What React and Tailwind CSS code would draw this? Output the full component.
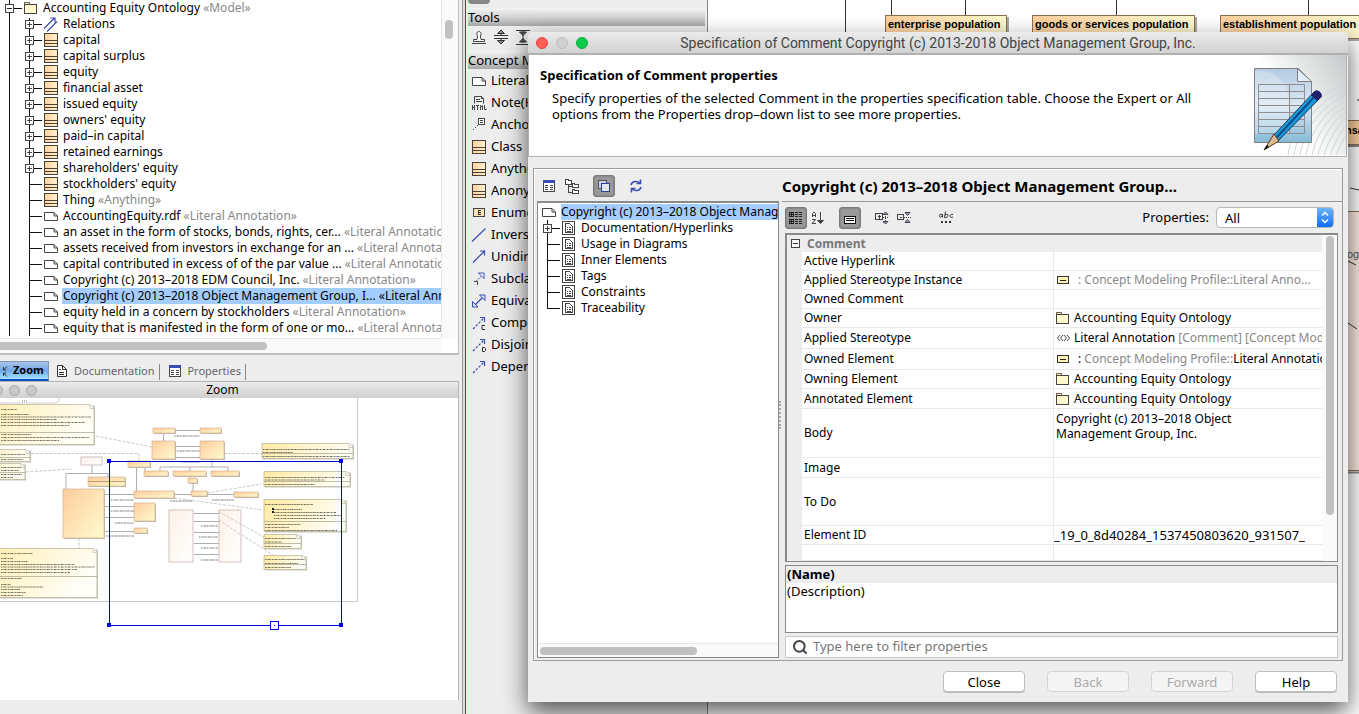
import React, { useState } from 'react';
import { Search } from 'lucide-react';

const treeItems = [
  { label: 'Relations', icon: 'relations', expand: true },
  { label: 'capital', icon: 'class', expand: true },
  { label: 'capital surplus', icon: 'class', expand: true },
  { label: 'equity', icon: 'class', expand: true },
  { label: 'financial asset', icon: 'class', expand: true },
  { label: 'issued equity', icon: 'class', expand: true },
  { label: "owners' equity", icon: 'class', expand: true },
  { label: 'paid–in capital', icon: 'class', expand: true },
  { label: 'retained earnings', icon: 'class', expand: true },
  { label: "shareholders' equity", icon: 'class', expand: true },
  { label: "stockholders' equity", icon: 'class' },
  { label: 'Thing', icon: 'class', note: '«Anything»' },
  { label: 'AccountingEquity.rdf', icon: 'note', note: '«Literal Annotation»' },
  { label: 'an asset in the form of stocks, bonds, rights, cer...', icon: 'note', note: '«Literal Annotation»' },
  { label: 'assets received from investors in exchange for an ...', icon: 'note', note: '«Literal Annotation»' },
  { label: 'capital contributed in excess of of the par value ...', icon: 'note', note: '«Literal Annotation»' },
  { label: 'Copyright (c) 2013–2018 EDM Council, Inc.', icon: 'note', note: '«Literal Annotation»' },
  { label: 'Copyright (c) 2013–2018 Object Management Group, I...', icon: 'note', note: '«Literal Annotation»', selected: true },
  { label: 'equity held in a concern by stockholders', icon: 'note', note: '«Literal Annotation»' },
  { label: 'equity that is manifested in the form of one or mo...', icon: 'note', note: '«Literal Annotation»' },
];

const paletteItems = [
  { label: 'Literal', icon: 'note' },
  { label: 'Note(HTML)', icon: 'html' },
  { label: 'Anchor', icon: 'anchor' },
  { label: 'Class', icon: 'class' },
  { label: 'Anything', icon: 'class' },
  { label: 'Anonymous', icon: 'class' },
  { label: 'Enumeration', icon: 'enum' },
  { label: 'Inverse', icon: 'line' },
  { label: 'Unidirectional', icon: 'arrow' },
  { label: 'Subclass', icon: 'subclass' },
  { label: 'Equivalent', icon: 'double' },
  { label: 'Complement', icon: 'dashC' },
  { label: 'Disjoint', icon: 'dashD' },
  { label: 'Dependency', icon: 'dash' },
];

const specItems = [
  'Documentation/Hyperlinks',
  'Usage in Diagrams',
  'Inner Elements',
  'Tags',
  'Constraints',
  'Traceability',
];

const owner = (
  <>
    <Icon name="folder" />
    <span className="ml-1">Accounting Equity Ontology</span>
  </>
);

const properties = [
  { name: 'Active Hyperlink', height: 'h-[19px]' },
  {
    name: 'Applied Stereotype Instance',
    height: 'h-[19px]',
    value: (
      <>
        <Icon name="instance" />
        <span className="ml-2 text-[#888]">: Concept Modeling Profile::Literal Anno...</span>
      </>
    ),
  },
  { name: 'Owned Comment', height: 'h-[19px]' },
  { name: 'Owner', height: 'h-[19px]', value: owner },
  {
    name: 'Applied Stereotype',
    height: 'h-[21px]',
    value: (
      <>
        <Icon name="stereotype" />
        <span className="ml-1">
          Literal Annotation <span className="text-[#888]">[Comment] [Concept Modeling]</span>
        </span>
      </>
    ),
  },
  {
    name: 'Owned Element',
    height: 'h-[21px]',
    value: (
      <>
        <Icon name="instance" />
        <span className="ml-2">
          : <span className="text-[#888]">Concept Modeling Profile::</span>Literal Annotation
        </span>
      </>
    ),
  },
  { name: 'Owning Element', height: 'h-[19px]', value: owner },
  { name: 'Annotated Element', height: 'h-5', value: owner },
  { name: 'Body', height: 'h-[49px]', body: 'Copyright (c) 2013–2018 Object Management Group, Inc.' },
  { name: 'Image', height: 'h-5' },
  { name: 'To Do', height: 'h-12' },
  { name: 'Element ID', height: 'h-[19px]', value: <span className="text-[13px]">_19_0_8d40284_1537450803620_931507_</span> },
  { name: '', height: 'h-4' },
];

function Icon({ name }) {
  const blue = '#3a4eb0';
  const shapes = {
    relations: (
      <g stroke={blue} fill="none" strokeWidth="1.200">
        <path d="M1 12.5 11.5 2M4 15.5 14 5.500M7.500 2H12V6.500" />
      </g>
    ),
    class: (
      <g shapeRendering="crispEdges">
        <rect x="1.500" y="1.500" width="13" height="13" fill="url(#classFill)" stroke="#4a4036" />
        <path d="M2 8.500h12M2 11.500h12" stroke="#4a4036" />
      </g>
    ),
    note: <path d="M1.500 4.500h9.500l3.500 3.500v4.500h-13zM11 4.500V8h3.500" fill="#fff" stroke="#444" />,
    folder: (
      <g shapeRendering="crispEdges">
        <path d="M2.500 2.500h5v2h-5z" fill="#ffe9c0" stroke="#7a6a50" />
        <rect x="2.500" y="4.500" width="12" height="9" fill="#fff8cf" stroke="#444" />
      </g>
    ),
    instance: (
      <g shapeRendering="crispEdges">
        <rect x="3.500" y="4.500" width="11" height="7" fill="#fff4b8" stroke="#333" />
        <path d="M6 8.500h6" stroke="#222" />
      </g>
    ),
    stereotype: <path d="M6 5 3.500 8 6 11M9 5 6.500 8 9 11M10 5l2.500 3L10 11M13 5l2.500 3L13 11" fill="none" stroke="#444" />,
    html: (
      <g stroke="#444" fill="none">
        <path d="M3.500 8.500v-7h7l2 2v5M10.500 1.500v2h2M5 4.500h4M5 6.500h6" />
        <path d="M1.500 10v5M3.500 10v5M1.500 12.500h2M5 10.500h3M6.500 10v5M9.500 15v-4.500l1 1.500 1-1.500V15M13.500 10v4.500H15.500" />
      </g>
    ),
    anchor: (
      <g stroke="#444" fill="none" shapeRendering="crispEdges">
        <rect x="7.500" y="1.500" width="6" height="6" fill="#fff" />
        <path d="M9 3.500h3M9 5.500h3" />
        <path d="m2 13 5-5" strokeDasharray="1.500 1" />
      </g>
    ),
    enum: (
      <g shapeRendering="crispEdges">
        <rect x="2.500" y="3.500" width="11" height="8" fill="#ffe4ba" stroke="#444" />
        <path d="M10 5.500H7.500v4H10M7.500 7.500H10" fill="none" stroke="#333" />
      </g>
    ),
    line: <path d="M1 14.500 14.500 1.500" stroke={blue} fill="none" strokeWidth="1.200" />,
    arrow: <path d="M2 13.500 14 1.500M9 2h4.500v4.500" stroke={blue} fill="none" strokeWidth="1.200" />,
    subclass: (
      <g fill="none">
        <path d="M5 10.500 10 5.500" stroke={blue} strokeDasharray="2 1" />
        <path d="M7.500 2H13v5.500z" fill="#fff" stroke={blue} />
        <path d="M3 10.500h3.500V14" stroke="#444" />
      </g>
    ),
    double: (
      <g fill="none" stroke={blue}>
        <path d="m4 12 8-8" strokeWidth="1.200" />
        <path d="M8.500 2H14v5.500zM1.500 8.500V14H7z" fill="#dfe3ff" />
      </g>
    ),
    dash: (
      <g fill="none" stroke={blue} strokeWidth="1.200">
        <path d="M2 14 13 3" strokeDasharray="2.500 1.500" />
        <path d="M9 2.500h4.500V7" />
      </g>
    ),
    page: (
      <g fill="none" stroke="#444" shapeRendering="crispEdges">
        <rect x="1.500" y="1.500" width="12" height="13" fill="#fff" />
        <path d="M4.500 3.500h4l3 3v6h-7zM6 7.500h1M8 7.500h2M6 9.500h1M8 9.500h2M6 11h4" />
      </g>
    ),
    doc: (
      <g fill="none" stroke="#333">
        <path d="M3.500 2.500h5l4 4v7h-9zM8.500 2.500v4h4" fill="#fff" />
        <path d="M5 6.500h2M5 9.500h5M5 11.500h5" />
      </g>
    ),
    sheet: (
      <g fill="none" stroke="#444" shapeRendering="crispEdges">
        <rect x="2.500" y="2.500" width="11" height="11" fill="#fff" />
        <path d="M2 3.500h12" stroke={blue} strokeWidth="3" />
        <path d="M4 7.500h3M9 7.500h3M4 9.500h3M9 9.500h3M4 11.500h3M9 11.500h3" />
      </g>
    ),
    zoom: (
      <g fill="none" stroke="#333">
        <path d="M2 3.500 5.500 7M5.500 4v3H3M14 3.500 10.500 7M10.500 4v3H13M2 13.500 5.500 10M5.500 13v-3H3M14 13.500 10.500 10M10.500 13v-3H13" />
      </g>
    ),
    branches: (
      <g fill="#fff" stroke="#444" shapeRendering="crispEdges">
        <path d="M4.500 6v8.500h4M4.500 8.500h4" fill="none" />
        <path d="M1.500 1.500h3v1h3v4h-6zM8.500 5.500h2v1h4v3h-6zM8.500 11.500h2v1h4v3h-6z" />
      </g>
    ),
    windows: (
      <g shapeRendering="crispEdges">
        <rect x="2.500" y="2.500" width="8" height="8" fill="#c9cef2" stroke="#555" />
        <rect x="5.500" y="5.500" width="8" height="8" fill="#e3e6fb" stroke="#2f3d9b" />
      </g>
    ),
    refresh: (
      <g fill="none" stroke={blue} strokeWidth="1.600">
        <path d="M3 7C4 3 9 2.500 12 5M13 9c-1 4-6 4.500-9 2" />
        <path d="M12.500 1.500V5.500H8.500M3.500 14.500V10.500H7.500" />
      </g>
    ),
    category: (
      <g fill="none" stroke="#222" shapeRendering="crispEdges">
        <path d="M1.500 2.500h4v4h-4zM1.500 9.500h4v4h-4zM3.500 3v3M2 4.500h3M3.500 10v3M2 11.500h3" />
        <path d="M7 2.500h3M11 2.500h3M7 4.500h3M11 4.500h3M7 6.500h3M11 6.500h3M7 9.500h3M11 9.500h3M7 11.500h3M11 11.500h3M7 13.500h3M11 13.500h3" />
      </g>
    ),
    sort: (
      <g fill="none" stroke="#444">
        <path d="M2.500 7V3.500L4 2l1.500 1.500V7M2.500 5.500h3M2 9.500h3.500L2 13.500h4M10.500 2v11" />
        <path d="M7.500 10.500h6l-3 3z" fill="#444" />
      </g>
    ),
    list: (
      <g shapeRendering="crispEdges">
        <rect x="2.500" y="6.500" width="11" height="7" fill="#fff" stroke="#111" />
        <path d="M4 8.500h8M4 10.500h8" stroke="#111" />
      </g>
    ),
    expand: (
      <g fill="none" stroke="#444">
        <path d="M1.500 3.500h7v6h-7zM5 5v3.500M3.500 6.500h3" shapeRendering="crispEdges" />
        <path d="M11.500 4v8M9 7.500h5" strokeDasharray="1 1" />
        <path d="M9 4.500 11.500 2 14 4.500zM9 11.500l2.500 2.500 2.500-2.500z" fill="#9aa2e0" />
      </g>
    ),
    collapse: (
      <g fill="none" stroke="#444">
        <path d="M1.500 4.500h6v5h-6zM3.500 7h2" shapeRendering="crispEdges" />
        <path d="M8 7.500h7" strokeDasharray="1 1" />
        <path d="m9 2.500 2.500 3 2.500-3zM9 12.500l2.500-3 2.500 3z" fill="#9aa2e0" />
      </g>
    ),
    abc: (
      <g fill="none" stroke="#333">
        <path d="M4.500 4.500C2 3.500 1 5 1.500 6.500s2.500.5 3-2v3M7.500 1.500 6.500 7.500c2 .5 3.500-.5 3.500-2s-1.500-1.500-3-.5M15 4.500c-2-.5-3 .5-3 1.500s1 2 3 1" />
        <path d="M3 12h2M7 12h2M11 12h2" strokeWidth="2" shapeRendering="crispEdges" />
      </g>
    ),
    stamp: <path d="M6 10.500 6.500 7C3.500 1 12 1 9.500 7l.5 3.500h3.500v2h-11v-2zM1 14.500h14" fill="#fff" stroke="#444" />,
    spread: (
      <g stroke="#333" fill="#888">
        <path d="M1 6.500h14M1 9.500h14M8 1v5M8 10v5" />
        <path d="M4.500 4.500 8 1l3.500 3.500zM4.500 11.500 8 15l3.500-3.500z" />
      </g>
    ),
    squeeze: (
      <g stroke="#333" fill="#555">
        <path d="M1 1.500h14M1 15.500h14M8 2v12" />
        <path d="M4.500 3 8 6.500 11.500 3zM4.500 13 8 9.500l3.500 3.500z" />
      </g>
    ),
  };
  if (name === 'dashC' || name === 'dashD') {
    return (
      <svg width="16" height="16" viewBox="0 0 16 16" className="shrink-0" aria-hidden="true">
        {shapes.dash}
        {name === 'dashC' ? (
          <path d="M14 10.500h-3v4h3" fill="none" stroke="#333" />
        ) : (
          <path d="M11.500 10.500h2l1 1v2l-1 1h-2z" fill="none" stroke="#333" />
        )}
      </svg>
    );
  }
  return (
    <svg width="16" height="16" viewBox="0 0 16 16" className="shrink-0" aria-hidden="true">
      {shapes[name]}
    </svg>
  );
}

// Branch lines in front of an item of the containment tree
function Branch({ expand, first }) {
  return (
    <svg width="43" height="16" className="shrink-0" shapeRendering="crispEdges" aria-hidden="true">
      <path d="M9.500 0v16M29.500 0v16M30 8.500h12" stroke="#111" fill="none" />
      {first && <path d="M29.500 0v2" stroke="#fff" />}
      {expand && (
        <g stroke="#444">
          <rect x="25.500" y="4.500" width="8" height="8" fill="#fff" />
          <path d="M27 8.500h5M29.500 6v5" />
        </g>
      )}
    </svg>
  );
}

function ContainmentTree() {
  return (
    <div className="border-r border-b-2 border-[#bdbdbd] bg-white">
      <div className="flex h-[338px]">
        <div className="min-w-0 flex-1 overflow-hidden whitespace-nowrap">
          <div className="flex h-4 items-center">
            <svg width="22" height="16" shapeRendering="crispEdges" className="shrink-0" aria-hidden="true">
              <path d="M9.500 0v16M10 8.500h12" stroke="#111" />
              <rect x="5.500" y="4.500" width="8" height="8" fill="#fff" stroke="#444" />
              <path d="M7 8.500h5" stroke="#222" />
            </svg>
            <Icon name="folder" />
            <span className="ml-[5px]">
              Accounting Equity Ontology <span className="text-[#888]">«Model»</span>
            </span>
          </div>
          {treeItems.map((item, index) => (
            <div key={item.label} className="flex h-4 items-center">
              <Branch expand={item.expand} first={index === 0} />
              <Icon name={item.icon} />
              <span className={item.selected ? 'ml-[3px] flex-1 bg-[#a4cdff] pl-px leading-4' : 'ml-1 leading-4'}>
                {item.label}{' '}
                {item.note && <span className={item.selected ? 'text-black' : 'text-[#888]'}>{item.note}</span>}
              </span>
            </div>
          ))}
        </div>
        <div className="w-[17px] border-l border-[#e6e6e6] bg-[#fafafa] pr-[5px] pl-[3px] pt-5">
          <div className="h-[19px] rounded-full bg-[#c1c1c1]" />
        </div>
      </div>
      <div className="mr-[17px] h-[15px] border-t border-[#e6e6e6] bg-[#fafafa] pt-[3px]">
        <div className="h-2 w-[267px] rounded-r-full bg-[#c1c1c1]" />
      </div>
    </div>
  );
}

function MapNote({ x, y, w, h, split, rows = [] }) {
  return (
    <g>
      <path d={`M${x + 1} ${y + 1}h${w}v${h}h${-w}z`} fill="#c9c9c0" />
      <path
        d={`M${x} ${y}h${w - 4}l4 4v${h - 4}h${-w}z`}
        fill="url(#noteFill)"
        stroke="#b5ad90"
        strokeWidth=".7"
      />
      <path d={`M${x + w - 4} ${y}v4h4`} fill="#fff" stroke="#b5ad90" strokeWidth=".6" />
      <path d={`M${x} ${y + split}h${w}`} stroke="#a8a088" strokeWidth=".7" />
      {rows.map(([dy, len, dx = 1]) => (
        <path
          key={dy}
          d={`M${x + dx} ${y + dy}h${len}`}
          stroke="#6e6a58"
          strokeWidth="1"
          strokeDasharray="1.300 .5 .8 .6 2 .5 .7 .7"
        />
      ))}
    </g>
  );
}

const mapBoxes = [
  [88, 477, 37, 9],
  [63, 489, 41, 49],
  [153, 428, 22, 5],
  [200, 428, 21, 5],
  [152, 441, 23, 18],
  [200, 441, 24, 18],
  [128, 461, 22, 6],
  [144, 471, 24, 5],
  [173, 471, 33, 5],
  [211, 471, 28, 5],
  [188, 478, 9, 5],
  [134, 491, 40, 7],
  [191, 491, 16, 5],
  [234, 492, 24, 5],
  [134, 503, 21, 18],
  [134, 528, 13, 5],
];

const mapLabels = [
  [174, 436, 26],
  [177, 451, 23],
  [181, 462, 19],
  [111, 500, 23],
  [111, 511, 23],
  [115, 523, 19],
  [106, 536, 28],
  [170, 501, 22],
  [212, 500, 22],
  [201, 526, 17],
  [199, 537, 19],
  [201, 548, 17],
  [201, 560, 17],
];

function DiagramMap() {
  return (
    <svg viewBox="0 398 459 302" width="459" height="302" role="img" aria-label="Diagram overview">
      <path d="M0 601.500H357.500V398" fill="none" stroke="#c8c8c8" />
      <path d="M0 403h56l3-2v-3" fill="none" stroke="#bbb" strokeWidth=".7" />
      <path d="M22 401h5" stroke="#666" strokeDasharray="1 1" />
      <g fill="none" stroke="#bbb" strokeWidth=".8" strokeDasharray="3 1.500">
        <path d="M96 436 152 447M31 453.500H139V461M26 472 72 469M79 538v10M224 453.500h38M207 493l55-9M174 498l89 12M219 512l54 30M219 520l54 35" />
      </g>
      <g fill="none" stroke="#8c8c8c" strokeWidth=".7">
        <path d="M92 465v8M66 489V473.500h42V477M175 430.500h25M163.500 433v8M175 446.500h25M175 457.500h25M212 459v8M160 471v-4h68v4M190 467v4M136.500 467v24M145 467v4M193 484v7M104 494.500h30M174 494.500h17M207 494.500h27M104 506.500h30M104 517.500h30M104 531.500h30M194 513.500h25M194 521.500h25M194 532.500h25M194 543.500h25M194 554.500h25" />
      </g>
      {mapBoxes.map(([x, y, w, h]) => (
        <g key={`${x}-${y}`}>
          <rect x={x + 1} y={y + 1} width={w} height={h} fill="#c4bfb8" />
          <rect x={x} y={y} width={w} height={h} fill="url(#boxFill)" stroke="#c59d78" strokeWidth=".5" />
        </g>
      ))}
      <path d="M88 481.500h37" stroke="#a08058" strokeWidth=".7" />
      {[[81, 457, 21, 8], [169, 510, 24, 52], [219, 510, 22, 52]].map(([x, y, w, h]) => (
        <rect key={x} x={x} y={y} width={w} height={h} fill="url(#paleFill)" stroke="#c4b5ae" strokeWidth=".8" />
      ))}
      <path d="m219 512 22 12M219 520l22 15" stroke="#bbb" strokeWidth=".8" strokeDasharray="3 1.500" />
      {mapLabels.map(([x, y, len]) => (
        <path key={`${x}-${y}`} d={`M${x} ${y}h${len}`} stroke="#777" strokeDasharray="1.300 .5 .8 .6 2 .5" />
      ))}
      <MapNote x={-40} y={404.500} w={134} h={40} split={28} rows={[[5, 16, 41], [10, 28, 41], [12.500, 90, 41], [15, 56, 41], [18, 84, 41], [21, 68, 41], [30, 30, 41], [33, 88, 41], [36, 58, 41]]} />
      <MapNote x={-40} y={449.500} w={70} h={12} split={8} rows={[[5, 24, 41], [10, 22, 41]]} />
      <MapNote x={-40} y={463.500} w={65} h={16} split={9} rows={[[4, 20, 41], [7, 18, 41], [11, 21, 41], [14, 12, 41]]} />
      <MapNote x={-40} y={548.500} w={137} h={49} split={28} rows={[[5, 32, 41], [10, 12, 41], [13, 27, 41], [16, 74, 41], [18.500, 94, 41], [21, 76, 41], [24, 69, 41], [30, 21, 41], [36, 10, 41], [38.500, 42, 41], [41, 19, 41], [44, 25, 41], [47, 22, 41]]} />
      <MapNote x={262} y={443.500} w={91} h={15} split={10} rows={[[6, 87], [9, 30], [13, 87]]} />
      <MapNote x={264} y={471.500} w={86} h={15} split={10} rows={[[6, 80], [8.500, 60], [13, 50]]} />
      <MapNote x={264} y={499.500} w={82} h={32} split={22} rows={[[5, 48], [10, 28, 10], [13, 62, 10], [16, 68, 10], [19, 52, 10], [25, 36], [28, 24], [31, 72]]} />
      <path d="M272 508h2v2h-2zM272 511h2v2h-2z" fill="#222" />
      <MapNote x={264} y={534.500} w={37} h={14} split={9} rows={[[4, 31], [7.500, 17], [12, 26]]} />
      <MapNote x={264} y={555.500} w={42} h={14} split={9} rows={[[4, 39], [8, 33], [12, 26]]} />
      <g shapeRendering="crispEdges">
        <rect x="109.500" y="461.500" width="232" height="164" fill="none" stroke="#0000d8" />
        <path d="M107 459h4v4h-4zM339 459h4v4h-4zM107 623h4v4h-4zM339 623h4v4h-4z" fill="#0000f0" />
        <rect x="270.500" y="621.500" width="8" height="8" fill="#fff" stroke="#0000f0" />
        <path d="M274 625h1v1h-1z" fill="#0000f0" />
      </g>
    </svg>
  );
}

function ZoomPanel() {
  return (
    <div>
      <div className="flex h-[26px] items-end text-[11px] text-[#666]" role="tablist">
        <button role="tab" className="flex h-5 w-[49px] items-center gap-1 overflow-hidden border border-l-0 border-b-2 border-[#8298b4] border-b-[#0a4fc4] bg-gradient-to-b from-[#a9c4e6] via-[#6fa8ea] to-[#9fe6ff] font-bold text-black">
          <span className="-ml-[7px] flex"><Icon name="zoom" /></span>
          Zoom
        </button>
        <button role="tab" className="ml-[5px] flex h-5 items-center gap-1 pr-1">
          <Icon name="doc" />
          Documentation
        </button>
        <span className="mb-px ml-px h-4 w-px bg-[#888]" />
        <button role="tab" className="ml-[7px] flex h-5 items-center gap-1 pr-1">
          <Icon name="sheet" />
          Properties
        </button>
        <span className="mb-px h-4 w-px bg-[#888]" />
      </div>
      <div className="flex h-[17px] items-center border-t border-r border-[#b4b4b4] bg-gradient-to-b from-[#ebebeb] to-[#cfcfcf]">
        <div className="flex w-[37px] shrink-0 justify-end gap-[6px] overflow-hidden">
          <span className="size-[11px] shrink-0 rounded-full border border-[#a8a8a8] bg-[#c9c9c9]" />
          <span className="size-[11px] shrink-0 rounded-full border border-[#a8a8a8] bg-[#c9c9c9]" />
          <span className="size-[11px] shrink-0 rounded-full border border-[#a8a8a8] bg-[#c9c9c9]" />
        </div>
        <span className="flex-1 pr-[50px] text-center">Zoom</span>
      </div>
      <div className="h-[302px] overflow-hidden border-r border-[#b4b4b4] bg-white">
        <DiagramMap />
      </div>
    </div>
  );
}

function Palette() {
  const heading = 'mr-[2px] h-[18px] bg-gradient-to-b from-[#f4f4f4] via-[#d4d4d4] to-[#a6a6a6] leading-[18px]';
  return (
    <aside className="w-[243px] shrink-0 overflow-hidden border-x-[1px] border-l-[#0a52c8] border-r-[#888] pl-[2px] text-[13px]">
      <div className="h-2">
        <div className="h-1 w-[22px] rounded-b bg-[#888]" />
      </div>
      <h2 className={heading}>Tools</h2>
      <div className="flex h-[25px] items-start gap-[6px] pt-[3px] pl-[3px]">
        <Icon name="stamp" />
        <Icon name="spread" />
        <Icon name="squeeze" />
      </div>
      <h2 className={heading}>Concept Modeling</h2>
      <div className="pt-px">
        {paletteItems.map((item) => (
          <button key={item.label} className="flex h-[22px] w-full items-center gap-1 pl-[3px]">
            <Icon name={item.icon} />
            {item.label}
          </button>
        ))}
      </div>
    </aside>
  );
}

function DiagramCanvas() {
  const name = 'absolute top-[15px] h-6 border border-[#8c6f4e] bg-gradient-to-r from-[#fccf9e] to-[#fbf8d0] px-[2px] text-[11px] leading-4 font-bold whitespace-nowrap shadow-[2px_2px_0_#a8a8a8]';
  return (
    <main className="relative min-w-0 flex-1 overflow-hidden bg-white font-['Liberation_Sans',sans-serif]">
      <svg className="absolute inset-0" width="651" height="714" aria-hidden="true">
        <path d="M137.500 0v40M183.500 0v16M257.500 0v16M408.500 0v16M600.500 0v16" stroke="#333" shapeRendering="crispEdges" />
        <path d="M642 188l9 2M650 99v2" stroke="#333" fill="none" />
        <rect x="560" y="211.500" width="100" height="259" fill="#fdebe2" stroke="#8c6f4e" />
        <path d="M560 472.500h100" stroke="#888" strokeWidth="2" />
        <path d="M640 261l8 4M640 323l9 6" stroke="#333" />
      </svg>
      <div className={`${name} left-[177px] w-[122px]`}>enterprise population</div>
      <div className={`${name} left-[324px] w-[163px]`}>goods or services population</div>
      <div className={`${name} left-[512px] w-[150px]`}>establishment population</div>
      <div className="absolute top-[120px] left-[560px] h-[25px] w-[100px] border border-[#8c6f4e] bg-[#fccf9e] pl-[76px] text-[11px] leading-[18px] font-bold shadow-[2px_2px_0_#888]">nsaction</div>
      <div className="absolute top-[246px] left-[639px] text-[11px] text-[#555]">ogy</div>
    </main>
  );
}

function NotepadArt() {
  return (
    <svg width="120" height="100" viewBox="0 0 120 100" className="shrink-0" aria-hidden="true">
      <defs>
        <linearGradient id="paper" x1="0" y1="0" x2="0" y2="1">
          <stop offset="0" stopColor="#b4cbe3" />
          <stop offset=".5" stopColor="#dbe7f2" />
          <stop offset="1" stopColor="#86bbd8" />
        </linearGradient>
        <linearGradient id="fade" x1="0" y1=".5" x2="1" y2="0">
          <stop offset=".4" stopColor="#fff" />
          <stop offset="1" stopColor="#c6c9ca" />
        </linearGradient>
        <linearGradient id="pencil" x1="0" y1="0" x2="1" y2="1">
          <stop offset="0" stopColor="#32b8f4" />
          <stop offset="1" stopColor="#0079c2" />
        </linearGradient>
      </defs>
      <rect width="120" height="100" fill="url(#fade)" />
      <g fill="none" stroke="#cdd5d8">
        {[0, 6, 12, 18, 24, 30, 36, 42, 48].map((d) => (
          <path key={d} d={`M${62 + d} 100C${66 + d} ${74 + d / 3} ${78 + d} ${48 + d / 2} 120 ${28 + d}`} />
        ))}
      </g>
      <path d="M28.500 13.500h44l13 13v61h-57z" fill="url(#paper)" stroke="#808080" />
      <path d="M29 16c18-2 31 8 34 29v34H29z" fill="#fff" opacity=".25" />
      <path d="M71.500 13.500v13h14z" fill="#e4f0ff" stroke="#808080" />
      <path d="M32.500 29.500h46v49h-46zM63.500 29.500v49M32.500 36.500h46M32.500 43.500h46M32.500 50.500h46M32.500 57.500h46M32.500 64.500h46M32.500 71.500h46" fill="none" stroke="#8e8e90" />
      <path d="m48 80 40-43c3-3 9 2 7 5L52 86z" fill="url(#pencil)" stroke="#16384f" />
      <path d="m51 82 39-42" stroke="#0a4b86" strokeWidth="2" />
      <path d="m85 40 4-4c3-2 8 2 6 6l-4 4z" fill="#20206c" />
      <path d="m48 79 5 7-15 9z" fill="#dfb98a" stroke="#4a3a2a" />
      <path d="m41 90 2 2-5 3z" fill="#111" />
    </svg>
  );
}

function ToolButton({ icon, label, active }) {
  return (
    <button
      aria-label={label}
      className={
        active
          ? 'flex size-[22px] items-center justify-center rounded-[3px] border border-[#7a7a7a] bg-[#999] shadow-[inset_0_0_2px_#666]'
          : 'flex size-[22px] items-center justify-center'
      }
    >
      <Icon name={icon} />
    </button>
  );
}

function SpecTree() {
  return (
    <div className="w-[242px] shrink-0">
      <div className="flex h-[31px] items-center gap-px pl-px">
        <ToolButton icon="sheet" label="Table view" />
        <ToolButton icon="branches" label="Tree view" />
        <span className="w-2" />
        <ToolButton icon="windows" label="Show in window" active />
        <span className="w-2" />
        <ToolButton icon="refresh" label="Refresh" />
      </div>
      <div className="flex h-[457px] flex-col border border-t-2 border-[#8a8a8a] bg-white pt-px whitespace-nowrap">
        <div className="flex h-4 items-center overflow-hidden">
          <span className="ml-[3px] flex"><Icon name="note" /></span>
          <span className="ml-1 flex-1 overflow-hidden bg-[#a4cdff] leading-4">Copyright (c) 2013–2018 Object Management Group</span>
        </div>
        {specItems.map((item, index) => (
          <div key={item} className="flex h-4 items-center">
            <svg width="23" height="16" className="shrink-0" shapeRendering="crispEdges" aria-hidden="true">
              <path d={index === specItems.length - 1 ? 'M9.500 0v8.500h12' : 'M9.500 0v16M9.500 8.500h12'} fill="none" stroke="#111" />
              {index === 0 && (
                <g stroke="#444">
                  <rect x="5.500" y="4.500" width="8" height="8" fill="#fff" />
                  <path d="M7 8.500h5M9.500 6v5" />
                </g>
              )}
            </svg>
            <Icon name="page" />
            <span className="ml-1">{item}</span>
          </div>
        ))}
        <div className="mt-auto h-[14px] border-t border-[#e6e6e6] bg-[#fafafa] px-[2px] pt-[3px]">
          <div className="h-2 w-[157px] rounded-full bg-[#c1c1c1]" />
        </div>
      </div>
    </div>
  );
}

function PropertyTable() {
  return (
    <div className="flex h-[329px] overflow-hidden border-t-2 border-l-2 border-r border-b border-[#8a8a8a]">
      <div className="min-w-0 flex-1 bg-[#ededed]">
        <div className="flex h-[17px] items-center gap-[7px] pl-1 font-bold text-[#777]">
          <button aria-label="Collapse Comment" className="flex size-[9px] items-center justify-center border border-[#444] bg-white">
            <span className="h-px w-[5px] bg-[#333]" />
          </button>
          Comment
        </div>
        <div className="pl-[15px]">
          <table className="w-full table-fixed border-separate border-spacing-0 bg-white">
            <colgroup>
              <col className="w-[252px]" />
              <col />
            </colgroup>
            <tbody>
              {properties.map((prop) => (
                <tr key={prop.name} className={prop.height}>
                  <th scope="row" className="border-r border-b border-[#e8e8e8] p-0 pl-[2px] text-left align-middle leading-4 font-normal">
                    {prop.name}
                  </th>
                  <td className={prop.body ? 'border-b border-[#e8e8e8] p-0 px-[2px] align-top' : 'border-b border-[#e8e8e8] p-0'}>
                    {prop.body ? (
                      <p className="w-[220px] pt-[2px] leading-[15px]">{prop.body}</p>
                    ) : (
                      <div className="flex items-center overflow-hidden leading-4 whitespace-nowrap">{prop.value}</div>
                    )}
                  </td>
                </tr>
              ))}
            </tbody>
          </table>
        </div>
      </div>
      <div className="w-[15px] bg-[#fafafa] pt-[1px] pl-[4px]">
        <div className="h-[279px] w-2 rounded-full bg-[#c1c1c1]" />
      </div>
    </div>
  );
}

function PropertyPane() {
  const [filter, setFilter] = useState('');

  return (
    <div className="min-w-0 flex-1">
      <div className="h-8 border-b border-[#999] pt-[6px] text-[15px] leading-5 font-bold">
        Copyright (c) 2013–2018 Object Management Group...
      </div>
      <div className="pr-1 pl-[3px]">
        <div className="flex h-[31px] items-center">
          <ToolButton icon="category" label="Group by category" active />
          <ToolButton icon="sort" label="Sort" />
          <span className="w-[10px]" />
          <ToolButton icon="list" label="Show description" active />
          <span className="w-[10px]" />
          <ToolButton icon="expand" label="Expand all" />
          <ToolButton icon="collapse" label="Collapse all" />
          <span className="w-5" />
          <ToolButton icon="abc" label="Customize names" />
          <label htmlFor="mode" className="ml-auto text-[13px]">Properties:</label>
          <div className="relative mr-1 ml-[7px] h-[21px] w-[118px] overflow-hidden rounded border border-[#b8b8b8] bg-white">
            <select id="mode" className="h-[19px] w-full appearance-none pl-2 text-[13px] leading-[18px] outline-none">
              <option>All</option>
              <option>Expert</option>
              <option>Standard</option>
            </select>
            <span className="pointer-events-none absolute inset-y-0 right-0 flex w-4 items-center justify-center bg-gradient-to-b from-[#6cb3fa] to-[#0a6cf5]">
              <svg width="8" height="13" fill="none" stroke="#fff" strokeWidth="1.500" aria-hidden="true">
                <path d="m1 4.500 3-3 3 3M1 8.500l3 3 3-3" />
              </svg>
            </span>
          </div>
        </div>
        <PropertyTable />
        <div className="mt-[3px] h-[68px] border border-[#8a8a8a] bg-white text-[13px] leading-4">
          <div className="h-[17px] bg-[#ededed] pl-px font-bold">(Name)</div>
          <div className="pl-px">(Description)</div>
        </div>
        <label className="mt-[3px] flex h-[22px] items-center gap-[5px] border border-[#c8c8c8] bg-white pl-[6px] text-[13px]">
          <Search size={16} strokeWidth={3} color="#444" />
          <input
            value={filter}
            onChange={(e) => setFilter(e.target.value)}
            placeholder="Type here to filter properties"
            aria-label="Filter properties"
            className="flex-1 outline-none placeholder:text-[#777]"
          />
        </label>
      </div>
    </div>
  );
}

function SpecificationDialog() {
  const button = 'h-[21px] w-[82px] rounded border border-[#c0c0c0] bg-white text-[13px] leading-[18px] shadow-[0_1px_0_#bbb] disabled:border-[#d4d4d4] disabled:bg-[#f4f4f4] disabled:text-[#aaa] disabled:shadow-none';
  return (
    <div
      role="dialog"
      aria-label="Specification of Comment"
      className="absolute top-8 right-[11px] bottom-3 left-[528px] flex flex-col overflow-hidden rounded-t-[5px] bg-[#ededed] shadow-[0_10px_25px_rgba(0,0,0,0.65)]"
    >
      <div className="flex h-[23px] shrink-0 items-center border-b-2 border-[#b0b0b0] bg-gradient-to-b from-[#ebebeb] to-[#d2d2d2] px-2">
        <div className="flex w-[52px] gap-2">
          <button aria-label="Close window" className="size-3 rounded-full border border-[#e0443e] bg-[#ff5f57]" />
          <button aria-label="Minimize" className="size-3 rounded-full border border-[#bdbdbd] bg-[#d0d0d0]" />
          <button aria-label="Zoom window" className="size-3 rounded-full border border-[#0ab03c] bg-[#0acb4b]" />
        </div>
        <h1 className="flex-1 pt-px pr-[52px] text-center font-['Roboto',sans-serif] text-[14px] text-[#444]">
          Specification of Comment Copyright (c) 2013-2018 Object Management Group, Inc.
        </h1>
      </div>
      <header className="mr-px flex h-[102px] shrink-0 overflow-hidden border border-t-0 border-[#b0b0b0] bg-white text-[13px]">
        <div className="min-w-0 flex-1 pt-3 pl-[11px] leading-4">
          <h2 className="font-bold">Specification of Comment properties</h2>
          <p className="mt-[7px] ml-3 w-[680px]">
            Specify properties of the selected Comment in the properties specification table. Choose the Expert or All
            options from the Properties drop–down list to see more properties.
          </p>
        </div>
        <NotepadArt />
      </header>
      <section className="mx-[5px] mt-[11px] flex h-[493px] border border-[#9c9c9c] pt-px pl-[3px] shadow-[inset_1px_1px_0_#fff]">
        <SpecTree />
        <div className="flex w-[3px] items-center">
          <span className="h-7 border-l-2 border-dotted border-[#aaa]" />
        </div>
        <PropertyPane />
      </section>
      <footer className="mr-[11px] flex flex-1 items-center justify-end gap-[22px]">
        <button className={button}>Close</button>
        <button className={button} disabled>Back</button>
        <button className={button} disabled>Forward</button>
        <button className={button}>Help</button>
      </footer>
    </div>
  );
}

export default function App() {
  return (
    <div className="relative flex h-screen overflow-hidden bg-[#ededed] font-['Noto_Sans',sans-serif] text-[12px] text-black">
      <svg width="0" height="0" className="absolute" aria-hidden="true">
        <defs>
          <linearGradient id="classFill">
            <stop offset="0" stopColor="#ffd0a0" />
            <stop offset="1" stopColor="#fff3cf" />
          </linearGradient>
          <linearGradient id="boxFill" x1="0" y1="0" x2="1" y2="1">
            <stop offset="0" stopColor="#ffcc9c" />
            <stop offset="1" stopColor="#fffbd0" />
          </linearGradient>
          <linearGradient id="paleFill" x1="0" y1="0" x2="1" y2="1">
            <stop offset="0" stopColor="#fff0e6" />
            <stop offset="1" stopColor="#fff" />
          </linearGradient>
          <linearGradient id="noteFill" x1="0" y1="0" x2="1" y2=".3">
            <stop offset="0" stopColor="#ffeaa0" />
            <stop offset="1" stopColor="#fffef6" />
          </linearGradient>
        </defs>
      </svg>
      <div className="w-[459px] shrink-0">
        <ContainmentTree />
        <ZoomPanel />
      </div>
      <div className="ml-[3px] w-[3px] shrink-0 border-l border-[#999] bg-[#ddd]" />
      <Palette />
      <DiagramCanvas />
      <SpecificationDialog />
    </div>
  );
}
